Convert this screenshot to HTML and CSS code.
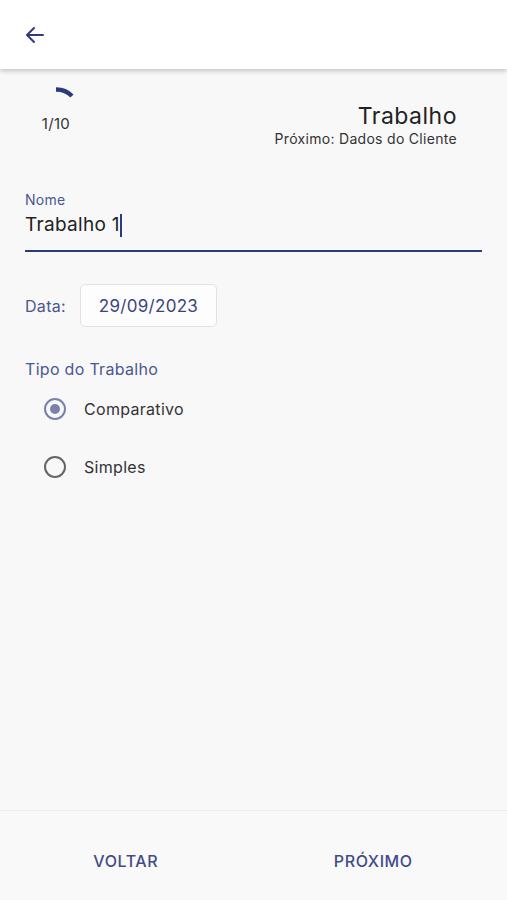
FILE: index.html
```html
<!DOCTYPE html>
<html lang="pt-BR">
<head>
    <meta charset="UTF-8">
    <meta name="viewport" content="width=device-width, initial-scale=1.0">
    <title>Trabalho</title>
    <link rel="stylesheet" href="styles.css">
</head>
<body>

    <!-- Barra superior -->
    <header class="app-bar">
        <button class="back-btn" aria-label="Voltar">
            <svg width="24" height="24" viewBox="0 0 24 24">
                <path d="M20 12H4.5M11 5l-7 7 7 7" fill="none" stroke="currentColor" stroke-width="2" stroke-linecap="round" stroke-linejoin="round"/>
            </svg>
        </button>
    </header>

    <main class="content">
        <!-- Passo atual -->
        <div class="step-row">
            <div class="progress">
                <svg width="60" height="24" viewBox="0 0 60 24">
                    <path d="M30 4.5 A22 22 0 0 1 46 11" fill="none" stroke="#2b3a7a" stroke-width="4.5"/>
                </svg>
                <span class="progress-text">1/10</span>
            </div>
            <div class="step-title">
                <h1>Trabalho</h1>
                <p>Próximo: Dados do Cliente</p>
            </div>
        </div>

        <!-- Nome -->
        <div class="field">
            <label>Nome</label>
            <div class="input-value">Trabalho 1<span class="caret"></span></div>
        </div>

        <!-- Data -->
        <div class="date-row">
            <span class="date-label">Data:</span>
            <button class="date-box">29/09/2023</button>
        </div>

        <!-- Tipo do trabalho -->
        <div class="radio-group">
            <p class="group-title">Tipo do Trabalho</p>
            <label class="radio-row">
                <span class="radio checked"></span>
                Comparativo
            </label>
            <label class="radio-row">
                <span class="radio"></span>
                Simples
            </label>
        </div>
    </main>

    <!-- Navegação -->
    <footer class="bottom-bar">
        <button class="nav-btn">Voltar</button>
        <button class="nav-btn">Próximo</button>
    </footer>

</body>
</html>
```

FILE: styles.css
```css
body {
    font-family: Inter, "Noto Sans", sans-serif;
    background-color: #f8f8f8;
    margin: 0;
    padding: 0;
    display: flex;
    flex-direction: column;
    min-height: 100vh;
    color: #222;
    letter-spacing: 0.3px;
}

.app-bar {
    height: 69px;
    background-color: #fff;
    box-shadow: 0 2px 5px rgba(0, 0, 0, 0.22);
    display: flex;
    align-items: center;
    padding-left: 23px;
    position: relative;
    z-index: 1;
}

.back-btn {
    background: none;
    border: none;
    padding: 0;
    color: #2f3c7c;
    display: flex;
}

.content {
    flex: 1;
    padding: 0 25px;
}

.step-row {
    display: flex;
    justify-content: space-between;
    align-items: flex-start;
    padding-top: 16px;
}

.progress {
    width: 60px;
    margin-left: 1px;
    display: flex;
    flex-direction: column;
    align-items: center;
}

.progress svg {
    display: block;
}

.progress-text {
    margin-top: 5px;
    font-size: 15px;
    line-height: 20px;
    color: #333;
}

.step-title {
    padding-top: 17px;
    padding-right: 25px;
    text-align: right;
}

.step-title h1 {
    margin: 0;
    font-size: 23px;
    line-height: 28px;
    font-weight: 400;
    letter-spacing: 0.5px;
    color: #222;
}

.step-title p {
    margin: 0;
    font-size: 14px;
    line-height: 18px;
    color: #333;
}

.field {
    margin-top: 43px;
}

.field label {
    display: block;
    font-size: 14px;
    line-height: 18px;
    color: #4b5791;
}

.input-value {
    margin-top: 4px;
    font-size: 19px;
    line-height: 24px;
    padding-bottom: 13px;
    border-bottom: 2px solid #2e3b7b;
    color: #222;
    display: flex;
    align-items: center;
}

.caret {
    display: inline-block;
    width: 2px;
    height: 23px;
    margin-left: 0;
    background-color: #2e3b7b;
}

.date-row {
    margin-top: 32px;
    display: flex;
    align-items: center;
    gap: 14px;
}

.date-label {
    font-size: 16px;
    color: #4b5791;
}

.date-box {
    height: 43px;
    width: 137px;
    background-color: #fdfdfd;
    border: 1px solid #e2e2e2;
    border-radius: 5px;
    font-family: inherit;
    font-size: 17px;
    letter-spacing: 0.3px;
    color: #3a457e;
    padding: 0;
}

.radio-group {
    margin-top: 32px;
}

.group-title {
    margin: 0 0 1px;
    font-size: 16px;
    line-height: 20px;
    color: #4b5791;
}

.radio-row {
    height: 58px;
    display: flex;
    align-items: center;
    gap: 18px;
    padding-left: 19px;
    font-size: 16px;
    color: #333;
}

.radio {
    width: 18px;
    height: 18px;
    border: 2px solid #666;
    border-radius: 50%;
    box-sizing: content-box;
    display: flex;
    align-items: center;
    justify-content: center;
}

.radio.checked {
    border-color: #7b80ae;
}

.radio.checked::after {
    content: "";
    width: 10px;
    height: 10px;
    border-radius: 50%;
    background-color: #7b80ae;
}

.bottom-bar {
    height: 89px;
    border-top: 1px solid #ececec;
    background-color: #f9f9f9;
    display: grid;
    grid-template-columns: 1fr 1fr;
    padding: 10px 10px 0 2px;
    box-sizing: border-box;
    height: 90px;
}

.nav-btn {
    background: none;
    border: none;
    font-family: inherit;
    font-size: 16px;
    font-weight: 500;
    text-transform: uppercase;
    letter-spacing: 0.6px;
    color: #424c86;
}
```
